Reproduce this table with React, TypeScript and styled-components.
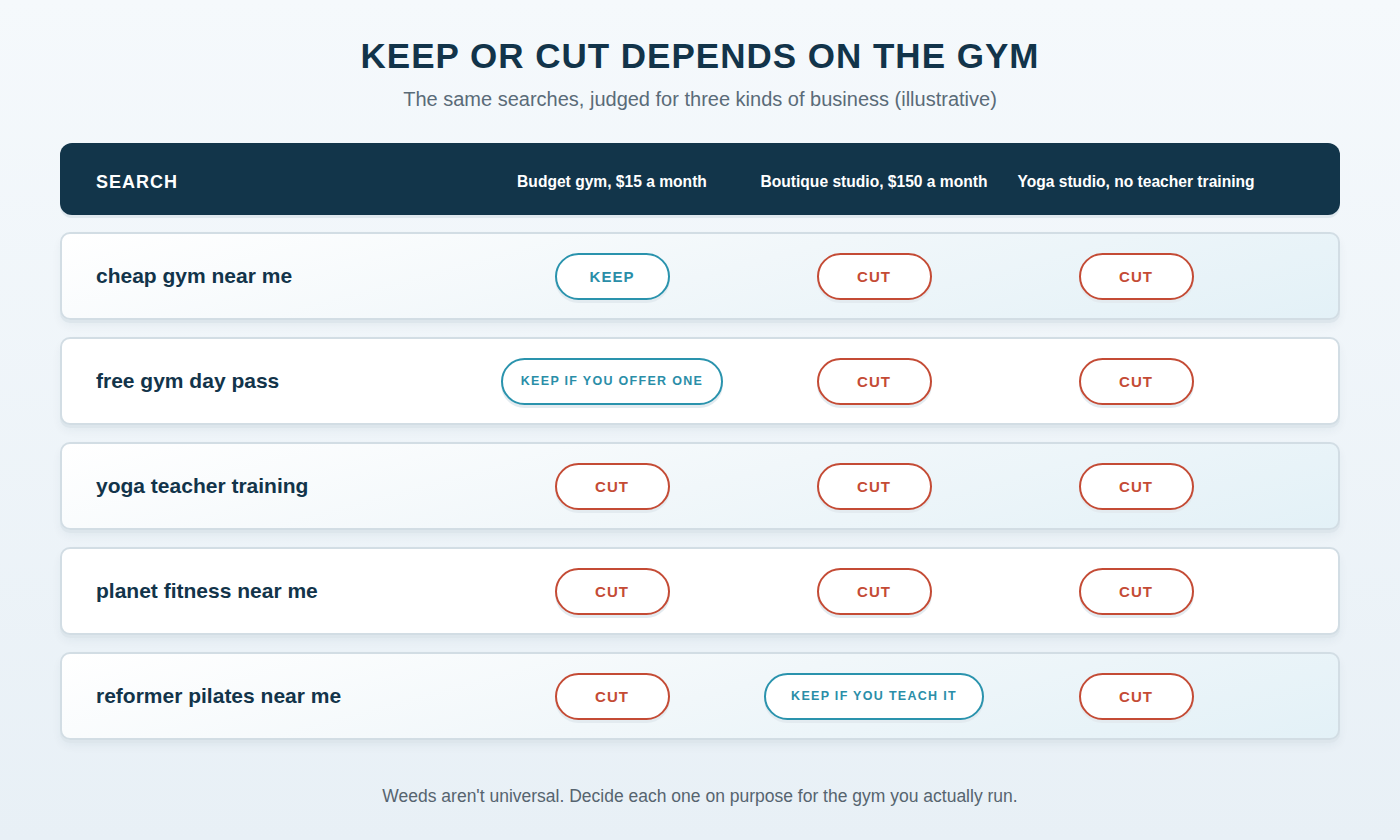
import React from "react";
import styled, { createGlobalStyle, css } from "styled-components";

const Global = createGlobalStyle`
  html, body { margin: 0; padding: 0; }
  body {
    font-family: "Liberation Sans", Arial, sans-serif;
    background: linear-gradient(180deg, #f5f9fc 0%, #e8f0f6 100%);
    min-height: 840px;
  }
`;

const Page = styled.div`
  width: 1400px;
  height: 840px;
  box-sizing: border-box;
  padding: 36px 60px 0;
  display: flex;
  flex-direction: column;
  align-items: stretch;
`;

const Title = styled.h1`
  margin: 0;
  text-align: center;
  font-size: 35px;
  line-height: 40px;
  font-weight: 700;
  letter-spacing: 1px;
  color: #12344a;
`;

const Subtitle = styled.p`
  margin: 11px 0 0;
  text-align: center;
  font-size: 20px;
  line-height: 24px;
  color: #5a6b78;
`;

const Table = styled.div`
  margin-top: 32px;
  display: flex;
  flex-direction: column;
  gap: 17px;
`;

const grid = css`
  display: grid;
  grid-template-columns: 385px repeat(3, 262px);
  align-items: center;
  box-sizing: border-box;
`;

const HeaderRow = styled.div`
  ${grid};
  height: 72px;
  padding: 6px 36px 0;
  background: #12354a;
  border-radius: 12px;
  box-shadow: 0 3px 0 #dfe8ee;
  color: #ffffff;
`;

const HeadLabel = styled.div`
  font-size: 18px;
  font-weight: 700;
  letter-spacing: 1px;
`;

const HeadCol = styled.div`
  text-align: center;
  font-size: 15.6px;
  font-weight: 700;
  white-space: nowrap;
`;

const Row = styled.div<{ $tint: boolean }>`
  ${grid};
  height: 88px;
  padding: 0 34px;
  border: 2px solid #d2dde4;
  border-radius: 10px;
  background: ${(p) =>
    p.$tint
      ? "linear-gradient(165deg, #ffffff 0%, #f1f7fa 50%, #e3f1f7 100%)"
      : "#ffffff"};
  box-shadow: 0 3px 0 #dde6ec, 0 6px 10px rgba(18, 52, 74, 0.05);
`;

const Query = styled.div`
  font-size: 21px;
  font-weight: 700;
  color: #12344a;
`;

const Cell = styled.div`
  display: flex;
  justify-content: center;
`;

const Pill = styled.span<{ $keep: boolean; $long: boolean }>`
  display: inline-flex;
  align-items: center;
  justify-content: center;
  box-sizing: border-box;
  height: 47px;
  min-width: ${(p) => (p.$long ? "220px" : "115px")};
  padding: 0 18px;
  border-radius: 24px;
  background: #ffffff;
  border: 2px solid ${(p) => (p.$keep ? "#2a93ad" : "#c44b35")};
  color: ${(p) => (p.$keep ? "#2a8ea8" : "#c44b35")};
  font-weight: 700;
  font-size: ${(p) => (p.$long ? "12.5px" : "15px")};
  letter-spacing: ${(p) => (p.$long ? "1.3px" : "1px")};
  box-shadow: 0 3px 0 #e3ebf0;
  white-space: nowrap;
`;

const Footer = styled.p`
  margin: 46px 0 0;
  text-align: center;
  font-size: 17.5px;
  color: #56646f;
`;

const cols = [
  "Budget gym, $15 a month",
  "Boutique studio, $150 a month",
  "Yoga studio, no teacher training",
];

const rows: { q: string; v: string[] }[] = [
  { q: "cheap gym near me", v: ["KEEP", "CUT", "CUT"] },
  { q: "free gym day pass", v: ["KEEP IF YOU OFFER ONE", "CUT", "CUT"] },
  { q: "yoga teacher training", v: ["CUT", "CUT", "CUT"] },
  { q: "planet fitness near me", v: ["CUT", "CUT", "CUT"] },
  { q: "reformer pilates near me", v: ["CUT", "KEEP IF YOU TEACH IT", "CUT"] },
];

export default function App() {
  return (
    <>
      <Global />
      <Page>
        <Title>KEEP OR CUT DEPENDS ON THE GYM</Title>
        <Subtitle>
          The same searches, judged for three kinds of business (illustrative)
        </Subtitle>
        <Table>
          <HeaderRow>
            <HeadLabel>SEARCH</HeadLabel>
            {cols.map((c) => (
              <HeadCol key={c}>{c}</HeadCol>
            ))}
          </HeaderRow>
          {rows.map((r, i) => (
            <Row key={r.q} $tint={i % 2 === 0}>
              <Query>{r.q}</Query>
              {r.v.map((v, j) => (
                <Cell key={j}>
                  <Pill $keep={v.startsWith("KEEP")} $long={v.length > 6}>
                    {v}
                  </Pill>
                </Cell>
              ))}
            </Row>
          ))}
        </Table>
        <Footer>
          Weeds aren't universal. Decide each one on purpose for the gym you
          actually run.
        </Footer>
      </Page>
    </>
  );
}
